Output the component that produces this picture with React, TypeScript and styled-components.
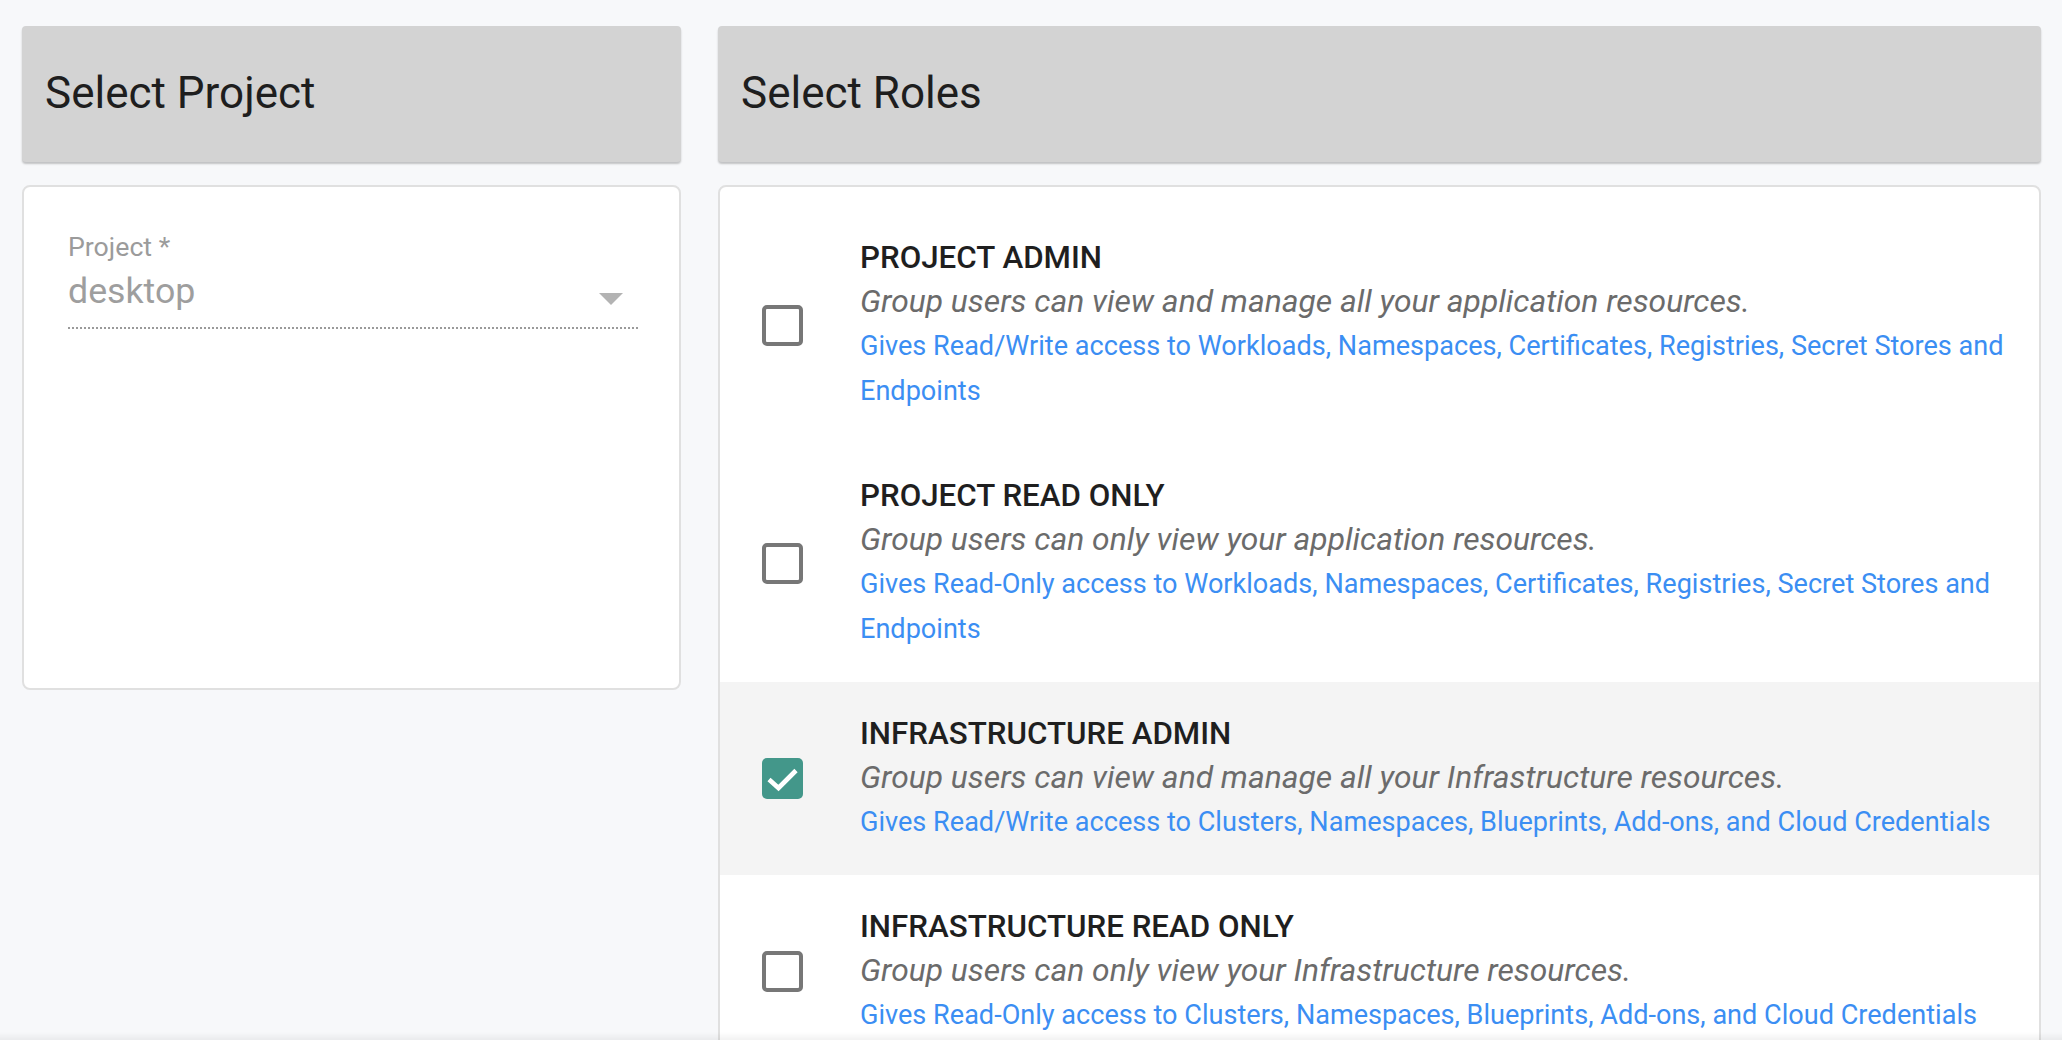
import styled, { createGlobalStyle } from "styled-components";

const GlobalStyle = createGlobalStyle`
  html, body {
    margin: 0;
    padding: 0;
    background: #f7f8fa;
    font-family: Roboto, "Liberation Sans", sans-serif;
  }
`;

const Page = styled.main`
  box-sizing: border-box;
  display: grid;
  gap: 37px;
  grid-template-columns: 659px 1fr;
  padding: 26px 21px 0 22px;
`;

const Column = styled.section`
  display: flex;
  flex-direction: column;
  gap: 23px;
`;

const SectionHeader = styled.header`
  align-items: center;
  background: #d3d3d3;
  border-radius: 4px;
  box-shadow: 0 2px 2px rgba(0, 0, 0, 0.22);
  box-sizing: border-box;
  display: flex;
  height: 136px;
  padding: 0 0 2px 23px;
`;

const HeaderTitle = styled.h2`
  color: #1e1e1e;
  font-size: 44px;
  font-weight: 400;
  line-height: 1;
  margin: 0;
`;

const Card = styled.div<{ $height?: number }>`
  background: #fff;
  border: 2px solid #e0e0e0;
  border-radius: 8px;
  box-sizing: border-box;
  height: ${({ $height }) => ($height ? `${$height}px` : "auto")};
  overflow: hidden;
`;

const FieldWrap = styled.div`
  padding: 45px 41px 0 44px;
`;

const FieldLabel = styled.label`
  color: #9b9b9b;
  display: block;
  font-size: 26.7px;
  line-height: 30px;
`;

const SelectRow = styled.div`
  align-items: center;
  display: flex;
  justify-content: space-between;
  margin-top: 8px;
  padding: 0 15px 17px 0;
  position: relative;

  &::after {
    background-image: repeating-linear-gradient(
      to right,
      #9a9a9a 0 2px,
      transparent 2px 4px
    );
    bottom: 0;
    content: "";
    height: 2px;
    left: 0;
    position: absolute;
    right: 0;
  }
`;

const SelectValue = styled.span`
  color: #9e9e9e;
  font-size: 35.7px;
  line-height: 42px;
`;

const Caret = styled.svg`
  fill: #b3b3b3;
  margin-top: 15px;
`;

const RoleList = styled.ul`
  list-style: none;
  margin: 0;
  padding: 19px 0 40px;
`;

const RoleRow = styled.li<{ $selected?: boolean }>`
  align-items: center;
  background: ${({ $selected }) => ($selected ? "#f4f4f4" : "transparent")};
  display: flex;
  gap: 57px;
  padding: 30px 20px 30px 42px;
`;

const CheckBox = styled.span<{ $checked?: boolean }>`
  align-items: center;
  background: ${({ $checked }) => ($checked ? "#43978a" : "transparent")};
  border: ${({ $checked }) => ($checked ? "0" : "4px solid #777")};
  border-radius: 5px;
  box-sizing: border-box;
  display: flex;
  flex: 0 0 41px;
  height: 41px;
  justify-content: center;
  width: 41px;
`;

const RoleText = styled.div`
  display: flex;
  flex-direction: column;
  min-width: 0;
`;

const RoleName = styled.strong`
  color: #1f1f1f;
  font-size: 31.3px;
  font-weight: 500;
  line-height: 44px;
`;

const RoleSummary = styled.em`
  color: #6b6b6b;
  font-size: 31.8px;
  font-style: italic;
  line-height: 42px;
  margin-bottom: 2px;
`;

const RoleAccess = styled.span`
  color: #3b8ef3;
  font-size: 27.1px;
  line-height: 45px;
`;

const BottomShade = styled.div`
  background: linear-gradient(to bottom, rgba(0, 0, 0, 0), rgba(0, 0, 0, 0.05));
  bottom: 0;
  height: 8px;
  left: 0;
  pointer-events: none;
  position: fixed;
  right: 0;
`;

type Role = {
  name: string;
  summary: string;
  access: string;
  checked?: boolean;
};

const roles: Role[] = [
  {
    name: "PROJECT ADMIN",
    summary: "Group users can view and manage all your application resources.",
    access:
      "Gives Read/Write access to Workloads, Namespaces, Certificates, Registries, Secret Stores and Endpoints",
  },
  {
    name: "PROJECT READ ONLY",
    summary: "Group users can only view your application resources.",
    access:
      "Gives Read-Only access to Workloads, Namespaces, Certificates, Registries, Secret Stores and Endpoints",
  },
  {
    name: "INFRASTRUCTURE ADMIN",
    summary:
      "Group users can view and manage all your Infrastructure resources.",
    access:
      "Gives Read/Write access to Clusters, Namespaces, Blueprints, Add-ons, and Cloud Credentials",
    checked: true,
  },
  {
    name: "INFRASTRUCTURE READ ONLY",
    summary: "Group users can only view your Infrastructure resources.",
    access:
      "Gives Read-Only access to Clusters, Namespaces, Blueprints, Add-ons, and Cloud Credentials",
  },
];

function RoleCheck({ checked }: { checked?: boolean }) {
  return (
    <CheckBox $checked={checked} aria-checked={checked} role="checkbox">
      {checked && (
        <svg width="41" height="41" viewBox="0 0 41 41">
          <path
            d="M7 21.5 L16.5 30 L34 12.5"
            fill="none"
            stroke="#fff"
            strokeWidth="4.6"
          />
        </svg>
      )}
    </CheckBox>
  );
}

export default function App() {
  return (
    <>
      <GlobalStyle />
      <Page>
        <Column>
          <SectionHeader>
            <HeaderTitle>Select Project</HeaderTitle>
          </SectionHeader>
          <Card $height={505}>
            <FieldWrap>
              <FieldLabel>Project *</FieldLabel>
              <SelectRow>
                <SelectValue>desktop</SelectValue>
                <Caret width="24" height="12" viewBox="0 0 24 12">
                  <path d="M0 0h24L12 12z" />
                </Caret>
              </SelectRow>
            </FieldWrap>
          </Card>
        </Column>
        <Column>
          <SectionHeader>
            <HeaderTitle>Select Roles</HeaderTitle>
          </SectionHeader>
          <Card>
            <RoleList>
              {roles.map((role) => (
                <RoleRow key={role.name} $selected={role.checked}>
                  <RoleCheck checked={role.checked} />
                  <RoleText>
                    <RoleName>{role.name}</RoleName>
                    <RoleSummary>{role.summary}</RoleSummary>
                    <RoleAccess>{role.access}</RoleAccess>
                  </RoleText>
                </RoleRow>
              ))}
            </RoleList>
          </Card>
        </Column>
      </Page>
      <BottomShade />
    </>
  );
}
